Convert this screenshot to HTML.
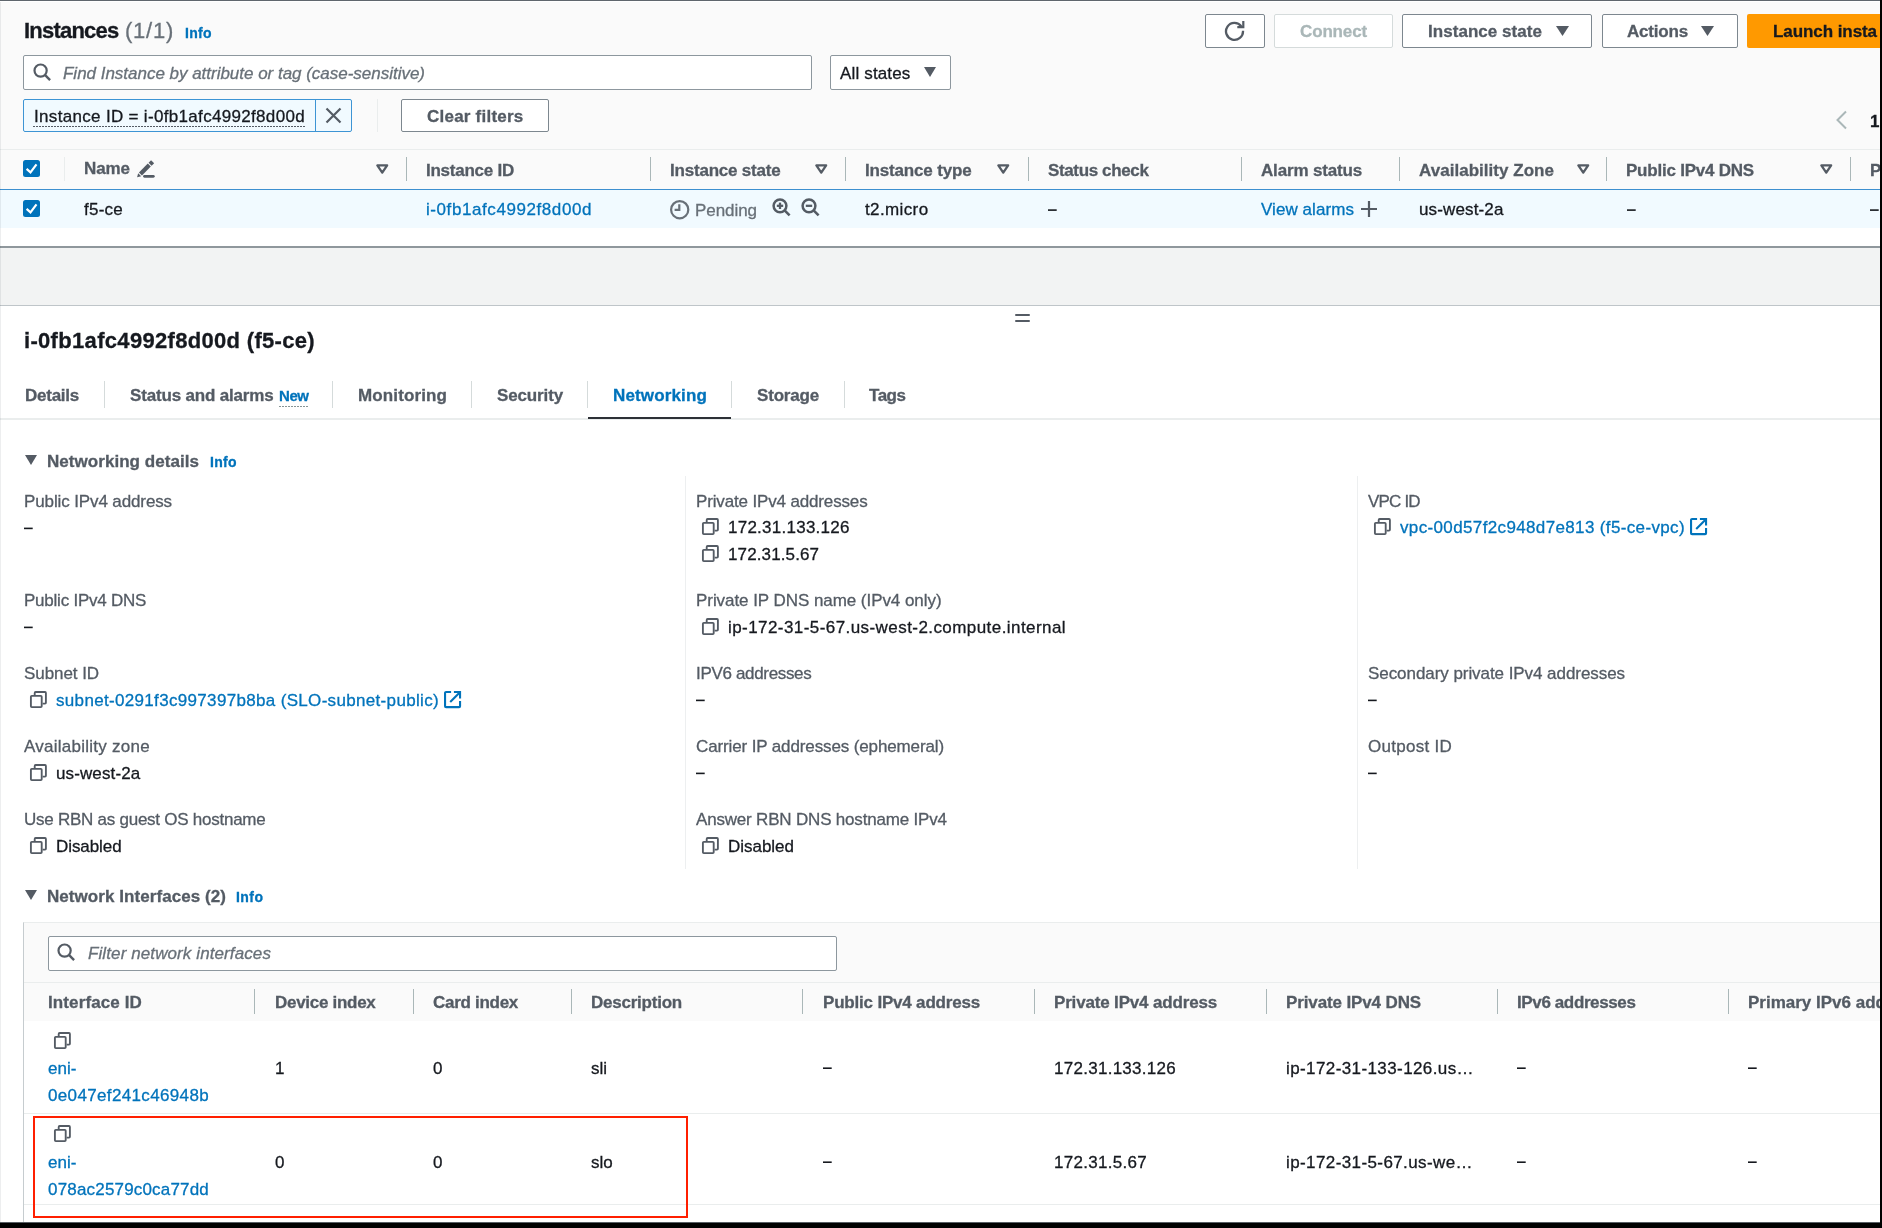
<!DOCTYPE html>
<html><head><meta charset="utf-8"><style>
html,body{margin:0;padding:0;width:1882px;height:1228px;overflow:hidden;background:#fff}
body{position:relative;font-family:"Liberation Sans",sans-serif}
.b{position:absolute;display:block}
.t{position:absolute;white-space:nowrap;will-change:transform;-webkit-text-stroke:0.3px currentColor}
</style></head><body>
<div class="b" style="left:0px;top:0px;width:1882px;height:248px;background:#fafafa"></div>
<div class="b" style="left:0px;top:0px;width:1882px;height:1px;background:#5f666d"></div>
<div class="b" style="left:0px;top:1px;width:1882px;height:1px;background:#fff"></div>
<div class="t" style="left:24px;top:20px;font-size:22px;line-height:22px;color:#16191f;font-weight:700;letter-spacing:-0.778px;">Instances</div>
<div class="t" style="left:125px;top:20px;font-size:22px;line-height:22px;color:#687078;letter-spacing:0.750px;">(1/1)</div>
<div class="t" style="left:185px;top:26px;font-size:14px;line-height:14px;color:#0073bb;font-weight:700;letter-spacing:0.336px;">Info</div>
<div class="b" style="left:1205px;top:14px;width:60px;height:34px;background:#fff;border:1px solid #7d878f;border-radius:2px;box-sizing:border-box"></div>
<svg class="b" style="left:1224px;top:20px" width="22" height="22" viewBox="0 0 22 22"><path d="M19 10.8A8.5 8.5 0 1 1 17.3 6.2" fill="none" stroke="#545b64" stroke-width="2.3"/><path d="M19.3 1v6.2h-6" fill="none" stroke="#545b64" stroke-width="2.2"/></svg>
<div class="b" style="left:1274px;top:14px;width:119px;height:34px;background:#fff;border:1px solid #d5dbdb;border-radius:2px;box-sizing:border-box"></div>
<div class="t" style="left:1300px;top:23px;font-size:17px;line-height:17px;color:#aab7b8;font-weight:700;letter-spacing:-0.143px;">Connect</div>
<div class="b" style="left:1402px;top:14px;width:190px;height:34px;background:#fff;border:1px solid #7d878f;border-radius:2px;box-sizing:border-box"></div>
<div class="t" style="left:1428px;top:23px;font-size:17px;line-height:17px;color:#545b64;font-weight:700;letter-spacing:0.044px;">Instance state</div>
<svg class="b" style="left:1556px;top:26px" width="13" height="10" viewBox="0 0 13 10"><path d="M0 0h13L6.5 10z" fill="#545b64"/></svg>
<div class="b" style="left:1602px;top:14px;width:136px;height:34px;background:#fff;border:1px solid #7d878f;border-radius:2px;box-sizing:border-box"></div>
<div class="t" style="left:1627px;top:23px;font-size:17px;line-height:17px;color:#545b64;font-weight:700;letter-spacing:-0.192px;">Actions</div>
<svg class="b" style="left:1701px;top:26px" width="13" height="10" viewBox="0 0 13 10"><path d="M0 0h13L6.5 10z" fill="#545b64"/></svg>
<div class="b" style="left:1747px;top:14px;width:140px;height:34px;background:#ff9900;border-radius:2px"></div>
<div class="t" style="left:1773px;top:23px;font-size:17px;line-height:17px;color:#16191f;font-weight:700;letter-spacing:-0.072px;">Launch insta</div>
<div class="b" style="left:23px;top:55px;width:789px;height:35px;background:#fff;border:1px solid #8d979e;border-radius:2px;box-sizing:border-box"></div>
<svg class="b" style="left:33px;top:63px" width="20" height="20" viewBox="0 0 20 20"><circle cx="7.6" cy="7.6" r="6.1" fill="none" stroke="#545b64" stroke-width="2.2"/><path d="M11.9 11.9l5.2 5.2" stroke="#545b64" stroke-width="2.4"/></svg>
<div class="t" style="left:63px;top:65px;font-size:17px;line-height:17px;color:#687078;font-style:italic;letter-spacing:-0.017px;">Find Instance by attribute or tag (case-sensitive)</div>
<div class="b" style="left:830px;top:55px;width:121px;height:35px;background:#fff;border:1px solid #8d979e;border-radius:2px;box-sizing:border-box"></div>
<div class="t" style="left:840px;top:65px;font-size:17px;line-height:17px;color:#16191f;letter-spacing:0.152px;">All states</div>
<svg class="b" style="left:924px;top:67px" width="12" height="10" viewBox="0 0 12 10"><path d="M0 0h12L6.0 10z" fill="#545b64"/></svg>
<div class="b" style="left:23px;top:99px;width:329px;height:33px;background:#f1faff;border:1px solid #3d94d4;border-radius:2px;box-sizing:border-box"></div>
<div class="b" style="left:315px;top:99px;width:1px;height:33px;background:#3d94d4"></div>
<div class="t" style="left:34px;top:108px;font-size:17px;line-height:17px;color:#16191f;letter-spacing:0.321px;">Instance ID = i-0fb1afc4992f8d00d</div>
<div class="b" style="left:33px;top:126px;width:272px;height:1px;background:repeating-linear-gradient(90deg,#545b64 0 2px,transparent 2px 3px)"></div>
<svg class="b" style="left:325px;top:107px" width="17" height="17" viewBox="0 0 17 17"><path d="M1.5 1.5l14 14M15.5 1.5l-14 14" stroke="#545b64" stroke-width="2.2"/></svg>
<div class="b" style="left:377px;top:99px;width:1px;height:33px;background:#eaeded"></div>
<div class="b" style="left:401px;top:99px;width:148px;height:33px;background:#fff;border:1px solid #7d878f;border-radius:2px;box-sizing:border-box"></div>
<div class="t" style="left:427px;top:108px;font-size:17px;line-height:17px;color:#545b64;font-weight:700;letter-spacing:0.227px;">Clear filters</div>
<svg class="b" style="left:1835px;top:110px" width="13" height="20" viewBox="0 0 13 20"><path d="M11 1.5L2.5 10l8.5 8.5" fill="none" stroke="#aab7b8" stroke-width="2"/></svg>
<div class="t" style="left:1870px;top:113px;font-size:17px;line-height:17px;color:#16191f;font-weight:700;letter-spacing:0;">1</div>
<div class="b" style="left:0px;top:149px;width:1882px;height:1px;background:#eaeded"></div>
<svg class="b" style="left:23px;top:160px" width="17" height="17" viewBox="0 0 17 17"><rect x="0" y="0" width="17" height="17" rx="2.5" fill="#0073bb"/><path d="M3.6 8.9l3.9 3.5 6-8" fill="none" stroke="#fff" stroke-width="2.2"/></svg>
<div class="b" style="left:64px;top:157px;width:1px;height:24px;background:#eaeded"></div>
<div class="t" style="left:84px;top:160px;font-size:17px;line-height:17px;color:#545b64;font-weight:700;letter-spacing:-0.078px;">Name</div>
<svg class="b" style="left:136px;top:160px" width="20" height="20" viewBox="0 0 20 20"><path d="M1.08 17.23L2.17 13.19L5.21 16.23z" fill="#545b64"/><path d="M4.46 13.94L13.3 5.1" stroke="#545b64" stroke-width="4.3"/><path d="M14.08 4.32L16.6 1.8" stroke="#545b64" stroke-width="4.3" stroke-linejoin="round"/><path d="M8.4 16.35h9" stroke="#545b64" stroke-width="2.6" stroke-linecap="round"/></svg>
<svg class="b" style="left:375px;top:163px" width="15" height="13" viewBox="0 0 15 13"><path d="M2.35 2.35h9.8L7.25 9.6z" fill="none" stroke="#545b64" stroke-width="2.3" stroke-linejoin="round"/></svg>
<div class="b" style="left:406px;top:157px;width:1px;height:24px;background:#aab7b8"></div>
<div class="b" style="left:650px;top:157px;width:1px;height:24px;background:#aab7b8"></div>
<div class="b" style="left:845px;top:157px;width:1px;height:24px;background:#aab7b8"></div>
<div class="b" style="left:1028px;top:157px;width:1px;height:24px;background:#aab7b8"></div>
<div class="b" style="left:1241px;top:157px;width:1px;height:24px;background:#aab7b8"></div>
<div class="b" style="left:1399px;top:157px;width:1px;height:24px;background:#aab7b8"></div>
<div class="b" style="left:1606px;top:157px;width:1px;height:24px;background:#aab7b8"></div>
<div class="b" style="left:1850px;top:157px;width:1px;height:24px;background:#aab7b8"></div>
<div class="t" style="left:426px;top:162px;font-size:17px;line-height:17px;color:#545b64;font-weight:700;letter-spacing:-0.246px;">Instance ID</div>
<div class="t" style="left:670px;top:162px;font-size:17px;line-height:17px;color:#545b64;font-weight:700;letter-spacing:-0.206px;">Instance state</div>
<svg class="b" style="left:814px;top:163px" width="15" height="13" viewBox="0 0 15 13"><path d="M2.35 2.35h9.8L7.25 9.6z" fill="none" stroke="#545b64" stroke-width="2.3" stroke-linejoin="round"/></svg>
<div class="t" style="left:865px;top:162px;font-size:17px;line-height:17px;color:#545b64;font-weight:700;letter-spacing:-0.166px;">Instance type</div>
<svg class="b" style="left:996px;top:163px" width="15" height="13" viewBox="0 0 15 13"><path d="M2.35 2.35h9.8L7.25 9.6z" fill="none" stroke="#545b64" stroke-width="2.3" stroke-linejoin="round"/></svg>
<div class="t" style="left:1048px;top:162px;font-size:17px;line-height:17px;color:#545b64;font-weight:700;letter-spacing:-0.366px;">Status check</div>
<div class="t" style="left:1261px;top:162px;font-size:17px;line-height:17px;color:#545b64;font-weight:700;letter-spacing:-0.165px;">Alarm status</div>
<div class="t" style="left:1419px;top:162px;font-size:17px;line-height:17px;color:#545b64;font-weight:700;letter-spacing:0.031px;">Availability Zone</div>
<svg class="b" style="left:1576px;top:163px" width="15" height="13" viewBox="0 0 15 13"><path d="M2.35 2.35h9.8L7.25 9.6z" fill="none" stroke="#545b64" stroke-width="2.3" stroke-linejoin="round"/></svg>
<div class="t" style="left:1626px;top:162px;font-size:17px;line-height:17px;color:#545b64;font-weight:700;letter-spacing:-0.222px;">Public IPv4 DNS</div>
<svg class="b" style="left:1819px;top:163px" width="15" height="13" viewBox="0 0 15 13"><path d="M2.35 2.35h9.8L7.25 9.6z" fill="none" stroke="#545b64" stroke-width="2.3" stroke-linejoin="round"/></svg>
<div class="t" style="left:1870px;top:162px;font-size:17px;line-height:17px;color:#545b64;font-weight:700;letter-spacing:0;">Public</div>
<div class="b" style="left:0px;top:189px;width:1882px;height:1px;background:#3d8fcf"></div>
<div class="b" style="left:0px;top:190px;width:1882px;height:38px;background:#f1faff"></div>
<svg class="b" style="left:23px;top:200px" width="17" height="17" viewBox="0 0 17 17"><rect x="0" y="0" width="17" height="17" rx="2.5" fill="#0073bb"/><path d="M3.6 8.9l3.9 3.5 6-8" fill="none" stroke="#fff" stroke-width="2.2"/></svg>
<div class="t" style="left:84px;top:201px;font-size:17px;line-height:17px;color:#16191f;letter-spacing:0.241px;">f5-ce</div>
<div class="t" style="left:426px;top:201px;font-size:17px;line-height:17px;color:#0073bb;letter-spacing:0.577px;">i-0fb1afc4992f8d00d</div>
<svg class="b" style="left:669px;top:199px" width="22" height="22" viewBox="0 0 22 22"><circle cx="10.7" cy="10.7" r="8.6" fill="none" stroke="#687078" stroke-width="2.2"/><path d="M10.3 5.2v5.6H5.6" fill="none" stroke="#687078" stroke-width="2.2"/></svg>
<div class="t" style="left:695px;top:202px;font-size:17px;line-height:17px;color:#687078;letter-spacing:-0.056px;">Pending</div>
<svg class="b" style="left:772px;top:198px" width="20" height="20" viewBox="0 0 20 20"><circle cx="8" cy="7.8" r="6.4" fill="none" stroke="#545b64" stroke-width="2.5"/><path d="M12.6 12.4l5 5" stroke="#545b64" stroke-width="2.6"/><path d="M4.8 7.8h6.4" stroke="#545b64" stroke-width="2.3"/><path d="M8 4.6v6.4" stroke="#545b64" stroke-width="2.3"/></svg>
<svg class="b" style="left:801px;top:198px" width="20" height="20" viewBox="0 0 20 20"><circle cx="8" cy="7.8" r="6.4" fill="none" stroke="#545b64" stroke-width="2.5"/><path d="M12.6 12.4l5 5" stroke="#545b64" stroke-width="2.6"/><path d="M4.8 7.8h6.4" stroke="#545b64" stroke-width="2.3"/></svg>
<div class="t" style="left:865px;top:201px;font-size:17px;line-height:17px;color:#16191f;letter-spacing:0.379px;">t2.micro</div>
<svg class="b" style="left:1047.5px;top:209px" width="10" height="4" viewBox="0 0 10 4"><rect x="0" y="0.30" width="8.7" height="1.6" fill="#16191f"/></svg>
<div class="t" style="left:1261px;top:201px;font-size:17px;line-height:17px;color:#0073bb;letter-spacing:0.065px;">View alarms</div>
<svg class="b" style="left:1360px;top:200px" width="18" height="18" viewBox="0 0 18 18"><path d="M9 1v16M1 9h16" stroke="#545b64" stroke-width="2.2"/></svg>
<div class="t" style="left:1419px;top:201px;font-size:17px;line-height:17px;color:#16191f;letter-spacing:0.136px;">us-west-2a</div>
<svg class="b" style="left:1626.5px;top:209px" width="10" height="4" viewBox="0 0 10 4"><rect x="0" y="0.30" width="8.7" height="1.6" fill="#16191f"/></svg>
<svg class="b" style="left:1869.5px;top:209px" width="10" height="4" viewBox="0 0 10 4"><rect x="0" y="0.30" width="8.7" height="1.6" fill="#16191f"/></svg>
<div class="b" style="left:0px;top:228px;width:1882px;height:18px;background:#fff"></div>
<div class="b" style="left:0px;top:246px;width:1882px;height:2px;background:#8f979c"></div>
<div class="b" style="left:0px;top:248px;width:1882px;height:57px;background:#f2f3f3"></div>
<div class="b" style="left:0px;top:305px;width:1882px;height:1px;background:#bfc5c9"></div>
<div class="b" style="left:1015px;top:314px;width:15px;height:2px;background:#545b64;border-radius:1px"></div>
<div class="b" style="left:1015px;top:320px;width:15px;height:2px;background:#545b64;border-radius:1px"></div>
<div class="t" style="left:24px;top:330px;font-size:22px;line-height:22px;color:#16191f;font-weight:700;letter-spacing:0.317px;">i-0fb1afc4992f8d00d (f5-ce)</div>
<div class="t" style="left:25px;top:387px;font-size:17px;line-height:17px;color:#545b64;font-weight:700;letter-spacing:-0.250px;">Details</div>
<div class="t" style="left:130px;top:387px;font-size:17px;line-height:17px;color:#545b64;font-weight:700;letter-spacing:-0.174px;">Status and alarms</div>
<div class="t" style="left:358px;top:387px;font-size:17px;line-height:17px;color:#545b64;font-weight:700;letter-spacing:0.119px;">Monitoring</div>
<div class="t" style="left:497px;top:387px;font-size:17px;line-height:17px;color:#545b64;font-weight:700;letter-spacing:-0.137px;">Security</div>
<div class="t" style="left:613px;top:387px;font-size:17px;line-height:17px;color:#0073bb;font-weight:700;letter-spacing:0.144px;">Networking</div>
<div class="t" style="left:757px;top:387px;font-size:17px;line-height:17px;color:#545b64;font-weight:700;letter-spacing:-0.185px;">Storage</div>
<div class="t" style="left:869px;top:387px;font-size:17px;line-height:17px;color:#545b64;font-weight:700;letter-spacing:-0.480px;">Tags</div>
<div class="t" style="left:279px;top:388px;font-size:15px;line-height:15px;color:#0073bb;font-weight:700;letter-spacing:-0.448px;">New</div>
<div class="b" style="left:279px;top:406px;width:29px;height:1px;background:repeating-linear-gradient(90deg,#879596 0 2px,transparent 2px 3px)"></div>
<div class="b" style="left:104px;top:381px;width:1px;height:27px;background:#d5dbdb"></div>
<div class="b" style="left:332px;top:381px;width:1px;height:27px;background:#d5dbdb"></div>
<div class="b" style="left:471px;top:381px;width:1px;height:27px;background:#d5dbdb"></div>
<div class="b" style="left:587px;top:381px;width:1px;height:27px;background:#d5dbdb"></div>
<div class="b" style="left:731px;top:381px;width:1px;height:27px;background:#d5dbdb"></div>
<div class="b" style="left:844px;top:381px;width:1px;height:27px;background:#d5dbdb"></div>
<div class="b" style="left:0px;top:418px;width:1882px;height:2px;background:#eaeded"></div>
<div class="b" style="left:588px;top:417px;width:143px;height:2px;background:#2d3136"></div>
<svg class="b" style="left:25px;top:455px" width="12" height="10" viewBox="0 0 12 10"><path d="M0 0h12L6.0 10z" fill="#545b64"/></svg>
<div class="t" style="left:47px;top:453px;font-size:17px;line-height:17px;color:#545b64;font-weight:700;letter-spacing:0.048px;">Networking details</div>
<div class="t" style="left:210px;top:455px;font-size:14px;line-height:14px;color:#0073bb;font-weight:700;letter-spacing:0.336px;">Info</div>
<div class="b" style="left:685px;top:476px;width:1px;height:393px;background:#edeff0"></div>
<div class="b" style="left:1357px;top:476px;width:1px;height:393px;background:#edeff0"></div>
<div class="t" style="left:24px;top:493px;font-size:17px;line-height:17px;color:#545b64;letter-spacing:-0.118px;">Public IPv4 address</div>
<svg class="b" style="left:24px;top:527px" width="10" height="4" viewBox="0 0 10 4"><rect x="0" y="0.60" width="8.7" height="1.6" fill="#16191f"/></svg>
<div class="t" style="left:24px;top:592px;font-size:17px;line-height:17px;color:#545b64;letter-spacing:-0.231px;">Public IPv4 DNS</div>
<svg class="b" style="left:24px;top:626px" width="10" height="4" viewBox="0 0 10 4"><rect x="0" y="0.60" width="8.7" height="1.6" fill="#16191f"/></svg>
<div class="t" style="left:24px;top:665px;font-size:17px;line-height:17px;color:#545b64;letter-spacing:-0.068px;">Subnet ID</div>
<svg class="b" style="left:29px;top:690px" width="19" height="19" viewBox="0 0 19 19"><path d="M5.7 5V2.9a.9 .9 0 0 1 .9-.9h9.4a.9 .9 0 0 1 .9.9v9.8a.9 .9 0 0 1-.9.9H13.6" fill="none" stroke="#545b64" stroke-width="1.85"/><rect x="1.9" y="5.9" width="10.8" height="11.2" rx="0.9" fill="none" stroke="#545b64" stroke-width="1.85"/></svg>
<div class="t" style="left:56px;top:692px;font-size:17px;line-height:17px;color:#0073bb;letter-spacing:0.327px;">subnet-0291f3c997397b8ba (SLO-subnet-public)</div>
<svg class="b" style="left:443px;top:690px" width="20" height="20" viewBox="0 0 20 20"><path d="M8.1 2.05H3.05a1 1 0 0 0-1 1v13.1a1 1 0 0 0 1 1h13a1 1 0 0 0 1-1v-5.1" fill="none" stroke="#0073bb" stroke-width="2.1"/><path d="M10.9 2.05h6.15v6.45M16.7 2.4L7.2 11.9" fill="none" stroke="#0073bb" stroke-width="2.1"/></svg>
<div class="t" style="left:24px;top:738px;font-size:17px;line-height:17px;color:#545b64;letter-spacing:0.259px;">Availability zone</div>
<svg class="b" style="left:29px;top:763px" width="19" height="19" viewBox="0 0 19 19"><path d="M5.7 5V2.9a.9 .9 0 0 1 .9-.9h9.4a.9 .9 0 0 1 .9.9v9.8a.9 .9 0 0 1-.9.9H13.6" fill="none" stroke="#545b64" stroke-width="1.85"/><rect x="1.9" y="5.9" width="10.8" height="11.2" rx="0.9" fill="none" stroke="#545b64" stroke-width="1.85"/></svg>
<div class="t" style="left:56px;top:765px;font-size:17px;line-height:17px;color:#16191f;letter-spacing:0.116px;">us-west-2a</div>
<div class="t" style="left:24px;top:811px;font-size:17px;line-height:17px;color:#545b64;letter-spacing:-0.251px;">Use RBN as guest OS hostname</div>
<svg class="b" style="left:29px;top:836px" width="19" height="19" viewBox="0 0 19 19"><path d="M5.7 5V2.9a.9 .9 0 0 1 .9-.9h9.4a.9 .9 0 0 1 .9.9v9.8a.9 .9 0 0 1-.9.9H13.6" fill="none" stroke="#545b64" stroke-width="1.85"/><rect x="1.9" y="5.9" width="10.8" height="11.2" rx="0.9" fill="none" stroke="#545b64" stroke-width="1.85"/></svg>
<div class="t" style="left:56px;top:838px;font-size:17px;line-height:17px;color:#16191f;letter-spacing:-0.070px;">Disabled</div>
<div class="t" style="left:696px;top:493px;font-size:17px;line-height:17px;color:#545b64;letter-spacing:-0.151px;">Private IPv4 addresses</div>
<svg class="b" style="left:701px;top:517px" width="19" height="19" viewBox="0 0 19 19"><path d="M5.7 5V2.9a.9 .9 0 0 1 .9-.9h9.4a.9 .9 0 0 1 .9.9v9.8a.9 .9 0 0 1-.9.9H13.6" fill="none" stroke="#545b64" stroke-width="1.85"/><rect x="1.9" y="5.9" width="10.8" height="11.2" rx="0.9" fill="none" stroke="#545b64" stroke-width="1.85"/></svg>
<div class="t" style="left:728px;top:519px;font-size:17px;line-height:17px;color:#16191f;letter-spacing:0.252px;">172.31.133.126</div>
<svg class="b" style="left:701px;top:544px" width="19" height="19" viewBox="0 0 19 19"><path d="M5.7 5V2.9a.9 .9 0 0 1 .9-.9h9.4a.9 .9 0 0 1 .9.9v9.8a.9 .9 0 0 1-.9.9H13.6" fill="none" stroke="#545b64" stroke-width="1.85"/><rect x="1.9" y="5.9" width="10.8" height="11.2" rx="0.9" fill="none" stroke="#545b64" stroke-width="1.85"/></svg>
<div class="t" style="left:728px;top:546px;font-size:17px;line-height:17px;color:#16191f;letter-spacing:0.126px;">172.31.5.67</div>
<div class="t" style="left:696px;top:592px;font-size:17px;line-height:17px;color:#545b64;letter-spacing:-0.056px;">Private IP DNS name (IPv4 only)</div>
<svg class="b" style="left:701px;top:617px" width="19" height="19" viewBox="0 0 19 19"><path d="M5.7 5V2.9a.9 .9 0 0 1 .9-.9h9.4a.9 .9 0 0 1 .9.9v9.8a.9 .9 0 0 1-.9.9H13.6" fill="none" stroke="#545b64" stroke-width="1.85"/><rect x="1.9" y="5.9" width="10.8" height="11.2" rx="0.9" fill="none" stroke="#545b64" stroke-width="1.85"/></svg>
<div class="t" style="left:728px;top:619px;font-size:17px;line-height:17px;color:#16191f;letter-spacing:0.431px;">ip-172-31-5-67.us-west-2.compute.internal</div>
<div class="t" style="left:696px;top:665px;font-size:17px;line-height:17px;color:#545b64;letter-spacing:-0.330px;">IPV6 addresses</div>
<svg class="b" style="left:696px;top:699px" width="10" height="4" viewBox="0 0 10 4"><rect x="0" y="0.60" width="8.7" height="1.6" fill="#16191f"/></svg>
<div class="t" style="left:696px;top:738px;font-size:17px;line-height:17px;color:#545b64;letter-spacing:-0.124px;">Carrier IP addresses (ephemeral)</div>
<svg class="b" style="left:696px;top:772px" width="10" height="4" viewBox="0 0 10 4"><rect x="0" y="0.60" width="8.7" height="1.6" fill="#16191f"/></svg>
<div class="t" style="left:696px;top:811px;font-size:17px;line-height:17px;color:#545b64;letter-spacing:-0.187px;">Answer RBN DNS hostname IPv4</div>
<svg class="b" style="left:701px;top:836px" width="19" height="19" viewBox="0 0 19 19"><path d="M5.7 5V2.9a.9 .9 0 0 1 .9-.9h9.4a.9 .9 0 0 1 .9.9v9.8a.9 .9 0 0 1-.9.9H13.6" fill="none" stroke="#545b64" stroke-width="1.85"/><rect x="1.9" y="5.9" width="10.8" height="11.2" rx="0.9" fill="none" stroke="#545b64" stroke-width="1.85"/></svg>
<div class="t" style="left:728px;top:838px;font-size:17px;line-height:17px;color:#16191f;letter-spacing:-0.032px;">Disabled</div>
<div class="t" style="left:1368px;top:493px;font-size:17px;line-height:17px;color:#545b64;letter-spacing:-0.815px;">VPC ID</div>
<svg class="b" style="left:1373px;top:517px" width="19" height="19" viewBox="0 0 19 19"><path d="M5.7 5V2.9a.9 .9 0 0 1 .9-.9h9.4a.9 .9 0 0 1 .9.9v9.8a.9 .9 0 0 1-.9.9H13.6" fill="none" stroke="#545b64" stroke-width="1.85"/><rect x="1.9" y="5.9" width="10.8" height="11.2" rx="0.9" fill="none" stroke="#545b64" stroke-width="1.85"/></svg>
<div class="t" style="left:1400px;top:519px;font-size:17px;line-height:17px;color:#0073bb;letter-spacing:0.360px;">vpc-00d57f2c948d7e813 (f5-ce-vpc)</div>
<svg class="b" style="left:1689px;top:517px" width="20" height="20" viewBox="0 0 20 20"><path d="M8.1 2.05H3.05a1 1 0 0 0-1 1v13.1a1 1 0 0 0 1 1h13a1 1 0 0 0 1-1v-5.1" fill="none" stroke="#0073bb" stroke-width="2.1"/><path d="M10.9 2.05h6.15v6.45M16.7 2.4L7.2 11.9" fill="none" stroke="#0073bb" stroke-width="2.1"/></svg>
<div class="t" style="left:1368px;top:665px;font-size:17px;line-height:17px;color:#545b64;letter-spacing:-0.060px;">Secondary private IPv4 addresses</div>
<svg class="b" style="left:1368px;top:699px" width="10" height="4" viewBox="0 0 10 4"><rect x="0" y="0.60" width="8.7" height="1.6" fill="#16191f"/></svg>
<div class="t" style="left:1368px;top:738px;font-size:17px;line-height:17px;color:#545b64;letter-spacing:0.273px;">Outpost ID</div>
<svg class="b" style="left:1368px;top:772px" width="10" height="4" viewBox="0 0 10 4"><rect x="0" y="0.60" width="8.7" height="1.6" fill="#16191f"/></svg>
<svg class="b" style="left:25px;top:890px" width="12" height="10" viewBox="0 0 12 10"><path d="M0 0h12L6.0 10z" fill="#545b64"/></svg>
<div class="t" style="left:47px;top:888px;font-size:17px;line-height:17px;color:#545b64;font-weight:700;letter-spacing:0.062px;">Network Interfaces (2)</div>
<div class="t" style="left:236px;top:890px;font-size:14px;line-height:14px;color:#0073bb;font-weight:700;letter-spacing:0.461px;">Info</div>
<div class="b" style="left:23px;top:922px;width:1859px;height:306px;background:#fafafa;border-left:1px solid #c6cccf;border-top:1px solid #eaeded;box-sizing:border-box"></div>
<div class="b" style="left:48px;top:936px;width:789px;height:35px;background:#fff;border:1px solid #8d979e;border-radius:2px;box-sizing:border-box"></div>
<svg class="b" style="left:57px;top:943px" width="20" height="20" viewBox="0 0 20 20"><circle cx="7.6" cy="7.6" r="6.1" fill="none" stroke="#545b64" stroke-width="2.2"/><path d="M11.9 11.9l5.2 5.2" stroke="#545b64" stroke-width="2.4"/></svg>
<div class="t" style="left:88px;top:945px;font-size:17px;line-height:17px;color:#687078;font-style:italic;letter-spacing:0.102px;">Filter network interfaces</div>
<div class="b" style="left:24px;top:982px;width:1858px;height:1px;background:#eaeded"></div>
<div class="b" style="left:254px;top:989px;width:1px;height:25px;background:#aab7b8"></div>
<div class="b" style="left:413px;top:989px;width:1px;height:25px;background:#aab7b8"></div>
<div class="b" style="left:571px;top:989px;width:1px;height:25px;background:#aab7b8"></div>
<div class="b" style="left:802px;top:989px;width:1px;height:25px;background:#aab7b8"></div>
<div class="b" style="left:1034px;top:989px;width:1px;height:25px;background:#aab7b8"></div>
<div class="b" style="left:1266px;top:989px;width:1px;height:25px;background:#aab7b8"></div>
<div class="b" style="left:1497px;top:989px;width:1px;height:25px;background:#aab7b8"></div>
<div class="b" style="left:1728px;top:989px;width:1px;height:25px;background:#aab7b8"></div>
<div class="t" style="left:48px;top:994px;font-size:17px;line-height:17px;color:#545b64;font-weight:700;letter-spacing:0.117px;">Interface ID</div>
<div class="t" style="left:275px;top:994px;font-size:17px;line-height:17px;color:#545b64;font-weight:700;letter-spacing:-0.288px;">Device index</div>
<div class="t" style="left:433px;top:994px;font-size:17px;line-height:17px;color:#545b64;font-weight:700;letter-spacing:-0.286px;">Card index</div>
<div class="t" style="left:591px;top:994px;font-size:17px;line-height:17px;color:#545b64;font-weight:700;letter-spacing:-0.230px;">Description</div>
<div class="t" style="left:823px;top:994px;font-size:17px;line-height:17px;color:#545b64;font-weight:700;letter-spacing:-0.192px;">Public IPv4 address</div>
<div class="t" style="left:1054px;top:994px;font-size:17px;line-height:17px;color:#545b64;font-weight:700;letter-spacing:-0.166px;">Private IPv4 address</div>
<div class="t" style="left:1286px;top:994px;font-size:17px;line-height:17px;color:#545b64;font-weight:700;letter-spacing:-0.126px;">Private IPv4 DNS</div>
<div class="t" style="left:1517px;top:994px;font-size:17px;line-height:17px;color:#545b64;font-weight:700;letter-spacing:-0.379px;">IPv6 addresses</div>
<div class="t" style="left:1748px;top:994px;font-size:17px;line-height:17px;color:#545b64;font-weight:700;letter-spacing:0;">Primary IPv6 address</div>
<div class="b" style="left:24px;top:1021px;width:1858px;height:207px;background:#fff"></div>
<div class="b" style="left:24px;top:1113px;width:1858px;height:1px;background:#eaeded"></div>
<div class="b" style="left:24px;top:1204px;width:1858px;height:1px;background:#eaeded"></div>
<svg class="b" style="left:53px;top:1031px" width="19" height="19" viewBox="0 0 19 19"><path d="M5.7 5V2.9a.9 .9 0 0 1 .9-.9h9.4a.9 .9 0 0 1 .9.9v9.8a.9 .9 0 0 1-.9.9H13.6" fill="none" stroke="#545b64" stroke-width="1.85"/><rect x="1.9" y="5.9" width="10.8" height="11.2" rx="0.9" fill="none" stroke="#545b64" stroke-width="1.85"/></svg>
<div class="t" style="left:48px;top:1060px;font-size:17px;line-height:17px;color:#0073bb;letter-spacing:0;">eni-</div>
<div class="t" style="left:48px;top:1087px;font-size:17px;line-height:17px;color:#0073bb;letter-spacing:0.350px;">0e047ef241c46948b</div>
<div class="t" style="left:275px;top:1060px;font-size:17px;line-height:17px;color:#16191f;letter-spacing:0;">1</div>
<div class="t" style="left:433px;top:1060px;font-size:17px;line-height:17px;color:#16191f;letter-spacing:0;">0</div>
<div class="t" style="left:591px;top:1060px;font-size:17px;line-height:17px;color:#16191f;letter-spacing:0;">sli</div>
<svg class="b" style="left:823px;top:1067px" width="10" height="4" viewBox="0 0 10 4"><rect x="0" y="0.40" width="8.7" height="1.6" fill="#16191f"/></svg>
<div class="t" style="left:1054px;top:1060px;font-size:17px;line-height:17px;color:#16191f;letter-spacing:0.273px;">172.31.133.126</div>
<div class="t" style="left:1286px;top:1060px;font-size:17px;line-height:17px;color:#16191f;letter-spacing:0.402px;">ip-172-31-133-126.us…</div>
<svg class="b" style="left:1517px;top:1067px" width="10" height="4" viewBox="0 0 10 4"><rect x="0" y="0.40" width="8.7" height="1.6" fill="#16191f"/></svg>
<svg class="b" style="left:1748px;top:1067px" width="10" height="4" viewBox="0 0 10 4"><rect x="0" y="0.40" width="8.7" height="1.6" fill="#16191f"/></svg>
<svg class="b" style="left:53px;top:1124px" width="19" height="19" viewBox="0 0 19 19"><path d="M5.7 5V2.9a.9 .9 0 0 1 .9-.9h9.4a.9 .9 0 0 1 .9.9v9.8a.9 .9 0 0 1-.9.9H13.6" fill="none" stroke="#545b64" stroke-width="1.85"/><rect x="1.9" y="5.9" width="10.8" height="11.2" rx="0.9" fill="none" stroke="#545b64" stroke-width="1.85"/></svg>
<div class="t" style="left:48px;top:1154px;font-size:17px;line-height:17px;color:#0073bb;letter-spacing:0;">eni-</div>
<div class="t" style="left:48px;top:1181px;font-size:17px;line-height:17px;color:#0073bb;letter-spacing:0.184px;">078ac2579c0ca77dd</div>
<div class="t" style="left:275px;top:1154px;font-size:17px;line-height:17px;color:#16191f;letter-spacing:0;">0</div>
<div class="t" style="left:433px;top:1154px;font-size:17px;line-height:17px;color:#16191f;letter-spacing:0;">0</div>
<div class="t" style="left:591px;top:1154px;font-size:17px;line-height:17px;color:#16191f;letter-spacing:0;">slo</div>
<svg class="b" style="left:823px;top:1161px" width="10" height="4" viewBox="0 0 10 4"><rect x="0" y="0.40" width="8.7" height="1.6" fill="#16191f"/></svg>
<div class="t" style="left:1054px;top:1154px;font-size:17px;line-height:17px;color:#16191f;letter-spacing:0.290px;">172.31.5.67</div>
<div class="t" style="left:1286px;top:1154px;font-size:17px;line-height:17px;color:#16191f;letter-spacing:0.400px;">ip-172-31-5-67.us-we…</div>
<svg class="b" style="left:1517px;top:1161px" width="10" height="4" viewBox="0 0 10 4"><rect x="0" y="0.40" width="8.7" height="1.6" fill="#16191f"/></svg>
<svg class="b" style="left:1748px;top:1161px" width="10" height="4" viewBox="0 0 10 4"><rect x="0" y="0.40" width="8.7" height="1.6" fill="#16191f"/></svg>
<div class="b" style="left:33px;top:1116px;width:655px;height:102px;border:2px solid #ff1f00;box-sizing:border-box"></div>
<div class="b" style="left:0px;top:2px;width:1px;height:1228px;background:rgba(0,20,30,0.07)"></div>
<div class="b" style="left:0px;top:1222px;width:1882px;height:1px;background:#585e64"></div>
<div class="b" style="left:0px;top:1223px;width:1882px;height:5px;background:#000"></div>
<div class="b" style="left:1880px;top:0px;width:2px;height:1228px;background:#000"></div>
</body></html>
